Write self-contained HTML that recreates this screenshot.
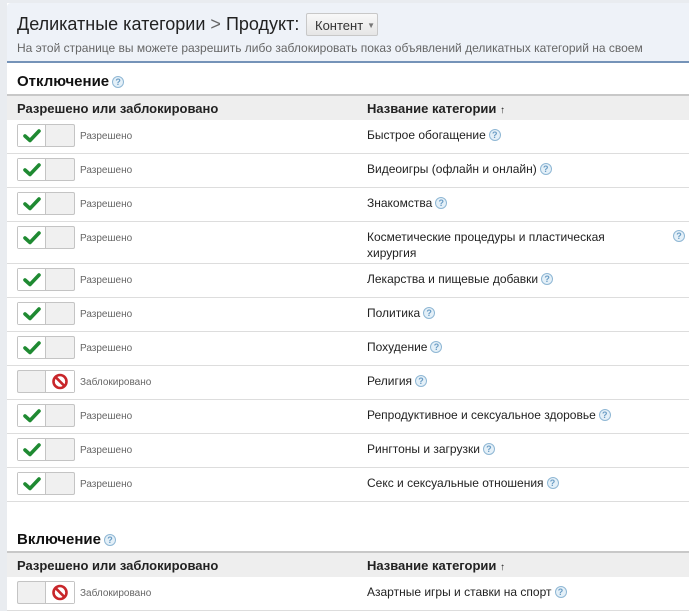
<!DOCTYPE html>
<html><head><meta charset="utf-8"><style>
*{margin:0;padding:0;box-sizing:border-box}
body{width:697px;height:611px;overflow:hidden;background:#fff;font-family:"Liberation Sans",Arial,sans-serif;position:relative}
.side{position:absolute;left:0;top:0;width:7px;height:611px;background:#e9ecf0}
.top{position:absolute;left:0;top:0;width:689px;height:3px;background:#e9ecf0}
.hdr{position:absolute;left:7px;top:3px;width:682px;height:60px;background:#eef2f8;border-top-left-radius:4px;border-bottom:2px solid #7593b8}
.title{position:absolute;left:17px;top:14px;font-size:18px;color:#222}
.title .g{color:#666}
.btn{position:absolute;left:306px;top:13px;width:72px;height:23px;border:1px solid #c8c8c8;border-radius:2px;background:linear-gradient(#f8f8f8,#e6e6e6);font-size:13px;color:#333;padding:4px 0 0 8px}
.btn span{font-size:8px;color:#777;margin-left:4px;vertical-align:2px}
.sub{position:absolute;left:17px;top:41px;font-size:12px;color:#666;white-space:nowrap}
.sec{position:absolute;left:17px;font-size:15px;font-weight:bold;color:#111}
.q{display:inline-block;width:12px;height:12px;border-radius:50%;border:1px solid #8fb7d4;background:#e4f0f8;color:#6a9cc4;font-size:9px;line-height:10px;text-align:center;font-weight:bold;vertical-align:1px;margin-left:3px}
.th{position:absolute;left:7px;width:682px;height:26px;background:#eee;border-top:2px solid #c8c8c8;font-size:13px;font-weight:bold;color:#222}
.th div{position:absolute;top:5px}
.row{position:absolute;left:7px;width:682px;border-bottom:1px solid #ddd}
.tg{position:absolute;left:10px;top:4px;width:58px;height:23px;border:1px solid #c4c4c4;border-radius:2px;background:#f0f0f0}
.tg i{position:absolute;top:0;width:28px;height:21px}
.tg .l{left:0;border-right:1px solid #c4c4c4}
.tg .on{background:#fff}
.tg .r{left:28px}
.st{position:absolute;left:73px;top:11px;font-size:10px;color:#666}
.nm{position:absolute;left:360px;top:7px;font-size:12px;color:#222;line-height:16px}
</style></head><body>
<div class="side"></div><div class="top"></div>
<div class="hdr"></div>
<div class="title">Деликатные категории <span class="g">&gt;</span> Продукт:</div>
<div class="btn">Контент<span>▼</span></div>
<div class="sub">На этой странице вы можете разрешить либо заблокировать показ объявлений деликатных категорий на своем</div>

<div class="sec" style="top:73px">Отключение<span class="q">?</span></div>
<div class="th" style="top:94px"><div style="left:10px">Разрешено или заблокировано</div><div style="left:360px">Название категории <span style="font-size:10px">↑</span></div></div>

<div id="r1"></div>
<script>
var ok='<svg width="28" height="21" viewBox="0 0 28 21"><path d="M7 11 L12 15.5 L21 6" stroke="#1f8a32" stroke-width="3.6" fill="none" stroke-linecap="round" stroke-linejoin="round"/></svg>';
var no='<svg width="28" height="21" viewBox="0 0 28 21"><circle cx="14" cy="10.5" r="6.5" fill="#fff" stroke="#c8262a" stroke-width="2.6"/><path d="M9.6 6.1 L18.4 14.9" stroke="#c8262a" stroke-width="2.6"/></svg>';
function row(top,h,allow,name,two){
 var t='<div class="tg">'+(allow?'<i class="l on">'+ok+'</i><i class="r"></i>':'<i class="l"></i><i class="r on" style="background:#fff">'+no+'</i>')+'</div>';
 var s='<div class="st">'+(allow?'Разрешено':'Заблокировано')+'</div>';
 var n=two?'<div class="nm" style="width:275px">'+name+'</div><span class="q" style="position:absolute;left:663px;top:8px">?</span>':'<div class="nm">'+name+'<span class="q">?</span></div>';
 return '<div class="row" style="top:'+top+'px;height:'+h+'px">'+t+s+n+'</div>';
}
var d=[[1,'Быстрое обогащение'],[1,'Видеоигры (офлайн и онлайн)'],[1,'Знакомства'],[1,'Косметические процедуры и пластическая хирургия',1],[1,'Лекарства и пищевые добавки'],[1,'Политика'],[1,'Похудение'],[0,'Религия'],[1,'Репродуктивное и сексуальное здоровье'],[1,'Рингтоны и загрузки'],[1,'Секс и сексуальные отношения']];
var h='',y=120;
d.forEach(function(e){var hh=e[2]?42:34;h+=row(y,hh,e[0],e[1],e[2]);y+=hh;});
h+=row(577,34,0,'Азартные игры и ставки на спорт');
document.getElementById('r1').outerHTML=h;
</script>

<div class="sec" style="top:531px">Включение<span class="q">?</span></div>
<div class="th" style="top:551px"><div style="left:10px">Разрешено или заблокировано</div><div style="left:360px">Название категории <span style="font-size:10px">↑</span></div></div>
</body></html>
